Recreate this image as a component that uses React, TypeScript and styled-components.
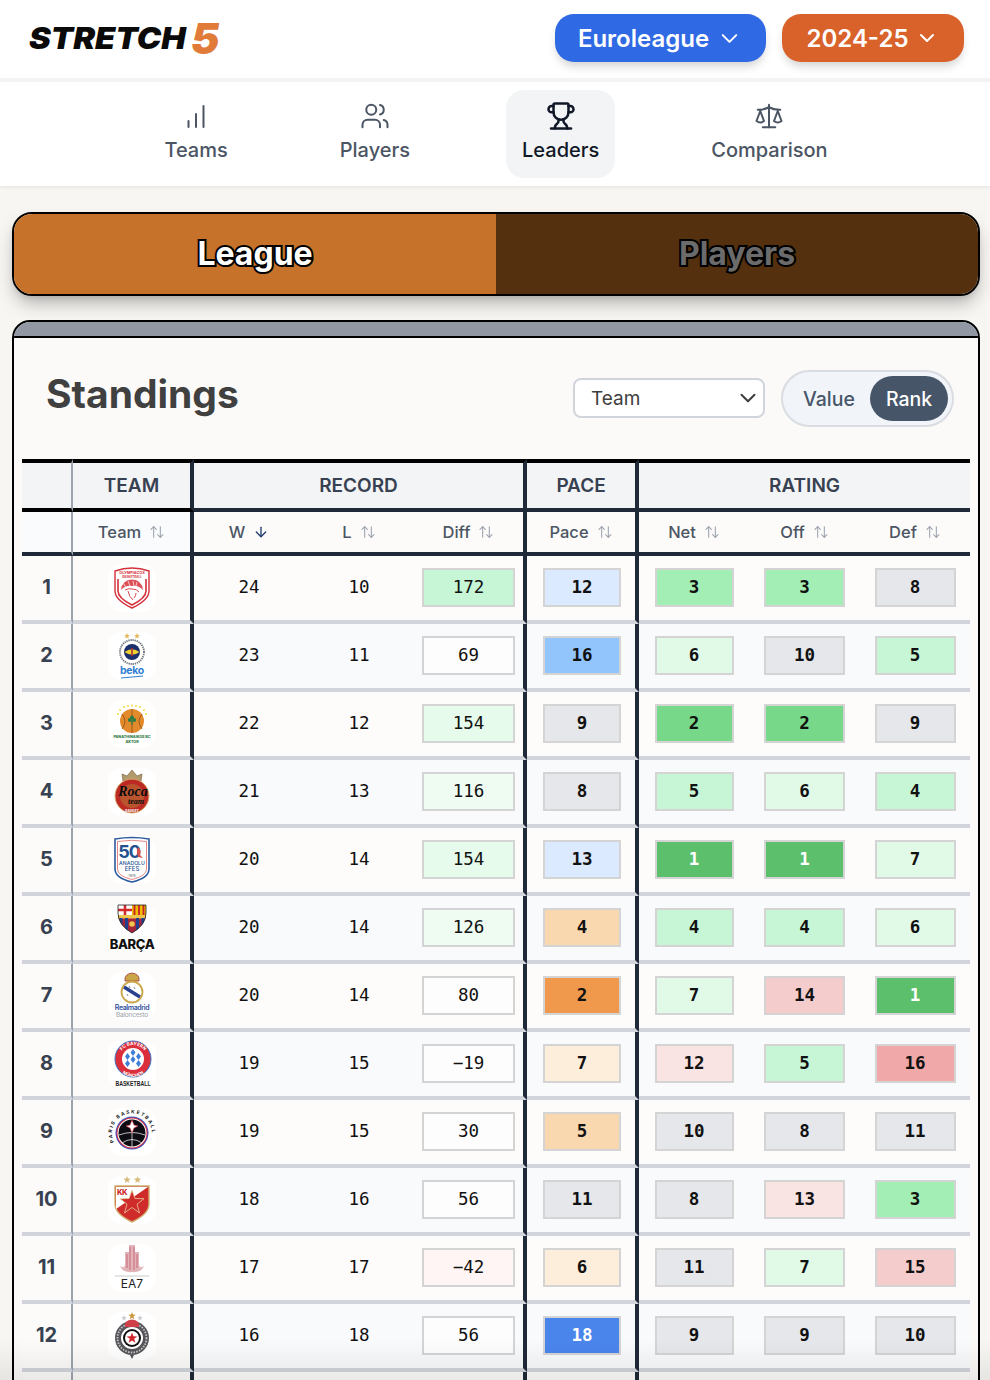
import React from 'react';
import styled, { createGlobalStyle } from 'styled-components';
import {
  ArrowDown,
  ArrowUpDown,
  ChevronDown,
  Scale,
  Trophy,
  Users,
} from 'lucide-react';

const GlobalStyle = createGlobalStyle`
  html, body {
    margin: 0;
    background: #f7f6f3;
    font-family: Inter, "Noto Sans", sans-serif;
  }
`;

const ratingColor = (n: number) => {
  if (n === 1) return '#5bbf6b';
  if (n === 2) return '#76d888';
  if (n === 3) return '#a3eeb5';
  if (n <= 5) return '#c6f6d5';
  if (n <= 7) return '#e1fae8';
  if (n <= 11) return '#e5e7eb';
  if (n <= 13) return '#fae3e3';
  if (n <= 15) return '#f5cccc';
  return '#f0a8a8';
};

const paceColor = (n: number) => {
  if (n === 18) return '#4a85ec';
  if (n === 16) return '#93c5fd';
  if (n >= 12) return '#dbeafe';
  if (n >= 8) return '#e5e7eb';
  if (n >= 6) return '#fdeedb';
  if (n >= 4) return '#f9d8b0';
  return '#f0984c';
};

const diffColor = (n: number) => {
  if (n >= 170) return '#c6f6d5';
  if (n >= 150) return '#e6fbec';
  if (n >= 100) return '#eefcf2';
  if (n <= -40) return '#fff5f4';
  return '#fdfdfd';
};

const BarsIcon = () => (
  <svg width="30" height="30" viewBox="0 0 30 30" fill="none" stroke="currentColor" strokeWidth="2" strokeLinecap="round">
    <path d="M7.500 26V20M15 26V13M22.500 26V5" />
  </svg>
);

const Olympiacos = () => (
  <svg width="48" height="48" viewBox="0 0 48 48">
    <path d="M7 7Q24 1 41 7V27Q41 36 24 44Q7 36 7 27Z" fill="#fff" stroke="#d4303a" strokeWidth="1.4" />
    <path d="M10 15V27Q10 34 24 41Q38 34 38 27V15" fill="none" stroke="#d4303a" strokeWidth="1.6" />
    <text x="24" y="9.500" fontSize="3.800" fontWeight="700" fill="#d4303a" textAnchor="middle" fontFamily="Inter">OLYMPIACOS</text>
    <text x="24" y="14" fontSize="3" fontWeight="700" fill="#d4303a" textAnchor="middle" fontFamily="Inter">BASKETBALL</text>
    <path d="M13 26Q14 16 24 15.500Q34 16 35 26Q30 21 24 22Q18 21 13 26Z" fill="#de5058" />
    <path d="M16 20l2 4M20 17l2 5M25 17l1 5M29 18l-1 4" stroke="#fff" strokeWidth=".7" />
    <path d="M17 26Q21 24 24 25Q29 25 31 28M20 27Q21 33 25 36M28 29Q28 32 26 34" fill="none" stroke="#d4303a" strokeWidth=".9" />
  </svg>
);

const Fener = () => (
  <svg width="48" height="48" viewBox="0 0 48 48">
    <path d="M19 1l.8 2 2 .2-1.500 1.300.5 2-1.800-1.100-1.800 1.100.5-2-1.500-1.300 2-.2zM29 1l.8 2 2 .2-1.500 1.300.5 2-1.800-1.100-1.800 1.100.5-2-1.500-1.300 2-.2z" fill="#e0b95a" />
    <circle cx="24" cy="20" r="12" fill="#fff" stroke="#6f737a" strokeWidth="1.800" strokeDasharray="1.300 .8" />
    <circle cx="24" cy="20" r="8" fill="#1e2f6e" />
    <path d="M16.500 20Q24 14.500 31.500 20Q24 25.500 16.500 20Z" fill="#f0d230" />
    <path d="M24 16v8" stroke="#b03030" strokeWidth="1.600" />
    <text x="24" y="42" fontSize="10.500" fontWeight="700" fill="#2f80d0" textAnchor="middle" fontFamily="Inter" letterSpacing="-.3">beko</text>
    <path d="M13 46L35 44" stroke="#2f80d0" strokeWidth="1.200" />
  </svg>
);

const Panathinaikos = () => (
  <svg width="48" height="48" viewBox="0 0 48 48">
    <g fill="#f2de3a">
      <circle cx="12" cy="10" r="1" /><circle cx="16" cy="7" r="1" /><circle cx="20" cy="6" r="1" /><circle cx="24" cy="5.500" r="1" />
      <circle cx="28" cy="6" r="1" /><circle cx="32" cy="7" r="1" /><circle cx="36" cy="10" r="1" /><circle cx="10" cy="14" r="1" /><circle cx="38" cy="14" r="1" />
    </g>
    <circle cx="24" cy="21" r="12" fill="#e38a2c" />
    <path d="M24 9v24M14 14Q20 21 14 29M34 14Q28 21 34 29" fill="none" stroke="#8a4d15" strokeWidth=".8" />
    <circle cx="21.800" cy="20" r="2" fill="#2f7d45" />
    <circle cx="26.200" cy="20" r="2" fill="#2f7d45" />
    <circle cx="24" cy="17.500" r="2" fill="#2f7d45" />
    <path d="M24 19v6" stroke="#2f7d45" strokeWidth="1.200" />
    <text x="24" y="38" fontSize="3.700" fontWeight="800" fill="#2f7d45" textAnchor="middle" fontFamily="Inter">PANATHINAIKOS BC</text>
    <text x="24" y="43" fontSize="3.700" fontWeight="800" fill="#2f7d45" textAnchor="middle" fontFamily="Inter">AKTOR</text>
  </svg>
);

const Monaco = () => (
  <svg width="48" height="48" viewBox="0 0 48 48">
    <path d="M15 13L14 6l5 2 5-6 5 6 5-2-1 7Z" fill="#b39a6a" stroke="#6f5a34" strokeWidth=".6" />
    <circle cx="24" cy="28" r="17" fill="#bd2a24" stroke="#d8b070" strokeWidth="1" />
    <circle cx="24" cy="28" r="12" fill="#b9542e" />
    <text x="25" y="28" fontSize="14" fontWeight="700" fontStyle="italic" fill="#0c0c0c" textAnchor="middle" fontFamily="Liberation Serif">Roca</text>
    <text x="28" y="36" fontSize="8" fontWeight="700" fontStyle="italic" fill="#0c0c0c" textAnchor="middle" fontFamily="Liberation Serif">team</text>
    <text x="24" y="43.500" fontSize="3.400" fontWeight="700" fill="#fff" textAnchor="middle" fontFamily="Inter">BASKET</text>
  </svg>
);

const Efes = () => (
  <svg width="48" height="48" viewBox="0 0 48 48">
    <path d="M7 3Q24 0 41 3V33Q41 42 24 46Q7 42 7 33Z" fill="#fff" stroke="#2c5a9e" strokeWidth="1.600" />
    <path d="M9.500 5.500Q24 3 38.500 5.500V33Q38.500 40 24 43.500Q9.500 40 9.500 33Z" fill="none" stroke="#d9534f" strokeWidth=".7" />
    <text x="21" y="22" fontSize="18" fontWeight="700" fill="#23508f" textAnchor="middle" fontFamily="Inter" letterSpacing="-1">50</text>
    <path d="M30 11q4 3 2 8l3 3-5-1-1-5Z" fill="#d9534f" />
    <text x="24" y="29" fontSize="5.200" fontWeight="500" fill="#23508f" textAnchor="middle" fontFamily="Inter">ANADOLU</text>
    <text x="24" y="35" fontSize="6" fontWeight="500" fill="#23508f" textAnchor="middle" fontFamily="Inter">EFES</text>
    <text x="24" y="40.500" fontSize="3.400" fill="#555" textAnchor="middle" fontFamily="Inter">1976</text>
  </svg>
);

const Barca = () => (
  <svg width="48" height="48" viewBox="0 0 48 48">
    <clipPath id="barcaShield">
      <path d="M10 1H38V9Q38 21 24 29Q10 21 10 9Z" />
    </clipPath>
    <g clipPath="url(#barcaShield)">
      <rect x="10" y="0" width="28" height="30" fill="#a4243b" />
      <rect x="10" y="1" width="14" height="10" fill="#fff" />
      <path d="M17 1V11M10 6H24" stroke="#d02a2a" strokeWidth="2.600" />
      <rect x="24" y="1" width="14" height="10" fill="#edbb00" />
      <path d="M26.500 1V11M31 1V11M35.500 1V11" stroke="#c7202c" strokeWidth="1.800" />
      <rect x="10" y="11" width="28" height="3.500" fill="#edc44c" />
      <path d="M13 14V26M18.500 14V28M29.500 14V28M35 14V26" stroke="#1f3f8f" strokeWidth="3" />
    </g>
    <path d="M10 1H38V9Q38 21 24 29Q10 21 10 9Z" fill="none" stroke="#222" strokeWidth=".8" />
    <circle cx="24" cy="20" r="2.800" fill="#edc44c" />
    <text x="24" y="45" fontSize="13" fontWeight="800" fill="#111" textAnchor="middle" fontFamily="Inter" letterSpacing="-.4">BARÇA</text>
  </svg>
);

const Madrid = () => (
  <svg width="48" height="48" viewBox="0 0 48 48">
    <path d="M17 9Q16 2 24 1Q32 2 31 9Z" fill="#c9a648" stroke="#a4343a" strokeWidth=".8" />
    <circle cx="24" cy="20" r="10.500" fill="#fff" stroke="#c9a648" strokeWidth="1.800" />
    <path d="M16 15L32 25" stroke="#2a3f8f" strokeWidth="3.500" />
    <path d="M21 14l1 2M26 15l1 2M19 22l1 2" stroke="#8a8f99" strokeWidth="1" />
    <text x="24" y="38" fontSize="7" fontWeight="600" fill="#2f4fa0" textAnchor="middle" fontFamily="Inter" letterSpacing="-.4">Realmadrid</text>
    <text x="24" y="45" fontSize="6.500" fill="#9aa0a8" textAnchor="middle" fontFamily="Inter" letterSpacing="-.2">Baloncesto</text>
  </svg>
);

const Bayern = () => (
  <svg width="48" height="48" viewBox="0 0 48 48">
    <circle cx="25" cy="19" r="18" fill="#dc2f3c" stroke="#3b73c9" strokeWidth="1" />
    <circle cx="25" cy="19" r="11" fill="#fff" />
    <g fill="#3f7fd6">
      <path d="M25 9l2.500 3.500-2.500 3.500-2.500-3.500zM19.500 13l2.500 3.500-2.500 3.500-2.500-3.500zM30.500 13l2.500 3.500-2.500 3.500-2.500-3.500zM25 16l2.500 3.500-2.500 3.500-2.500-3.500zM19.500 20l2.500 3.500-2.500 3.500-2.500-3.500zM30.500 20l2.500 3.500-2.500 3.500-2.500-3.500z" />
    </g>
    <path id="bayernArc" d="M11 19a14 14 0 0 1 28 0" fill="none" />
    <text fontSize="4.600" fontWeight="700" fill="#fff" fontFamily="Inter" textAnchor="middle">
      <textPath href="#bayernArc" startOffset="50%">FC BAYERN</textPath>
    </text>
    <path id="bayernArcLow" d="M8 20a17 17 0 0 0 34 0" fill="none" />
    <text fontSize="4.400" fontWeight="700" fill="#fff" fontFamily="Inter" textAnchor="middle">
      <textPath href="#bayernArcLow" startOffset="50%">MÜNCHEN</textPath>
    </text>
    <text x="0" y="0" transform="translate(25 46) scale(.8 1)" fontSize="6.500" fontWeight="700" fill="#222" textAnchor="middle" fontFamily="Liberation Sans">BASKETBALL</text>
  </svg>
);

const Paris = () => (
  <svg width="48" height="48" viewBox="0 0 48 48">
    <path id="parisArc" d="M6 34A20 20 0 1 1 42 34" fill="none" />
    <text fontSize="4.800" fontWeight="700" fill="#111" fontFamily="Inter" letterSpacing="1.600">
      <textPath href="#parisArc">PARIS BASKETBALL</textPath>
    </text>
    <circle cx="24" cy="25" r="16.500" fill="#3a56c8" />
    <circle cx="24" cy="25" r="15.500" fill="#d83040" />
    <circle cx="24" cy="25" r="14.500" fill="#fff" />
    <circle cx="24" cy="25" r="13.500" fill="#0c0c12" />
    <path d="M11 27Q24 22 37 27M14 35Q24 28 34 35M24 20V39" stroke="#e7e7ea" strokeWidth=".8" fill="none" />
    <path d="M24 12l2 5 4 1-4 2-2 5-2-5-4-2 4-1Z" fill="#fff" stroke="#d83040" strokeWidth=".6" />
  </svg>
);

const Zvezda = () => (
  <svg width="48" height="48" viewBox="0 0 48 48">
    <path d="M19 0l1 2.500 2.600.2-2 1.700.6 2.600-2.200-1.400-2.200 1.400.6-2.600-2-1.700 2.600-.2zM29.500 0l1 2.500 2.600.2-2 1.700.6 2.600-2.200-1.400-2.200 1.400.6-2.600-2-1.700 2.600-.2z" fill="#d8bb7c" />
    <path d="M7 10H41V28Q41 38 24 46Q7 38 7 28Z" fill="#cf2b2b" stroke="#d0b070" strokeWidth="1.400" />
    <path d="M8 11H40L8 33Z" fill="#fff" />
    <text x="9" y="19" fontSize="7.500" fontWeight="800" fill="#cf2b2b" fontFamily="Inter" letterSpacing="-.5">KK</text>
    <path d="M24 14l3 8.500 9 .2-7 5.500 2.500 8.800L24 31.500l-7.500 5.500L19 28.200l-7-5.500 9-.2Z" fill="#cf2b2b" stroke="#e6cfa0" strokeWidth=".8" />
  </svg>
);

const Milano = () => (
  <svg width="48" height="48" viewBox="0 0 48 48">
    <path d="M21 1H27V8H31V20Q31 25 36 22Q33 29 24 28Q15 29 12 22Q17 25 17 20V8H21Z" fill="#e3b3ba" />
    <path d="M22 3V26M26 3V26M19 10V24M29 10V24" stroke="#c46b78" strokeWidth="1" />
    <path d="M7 32H41" stroke="#b9bcc2" strokeWidth=".8" />
    <text x="24" y="44" fontSize="12" fill="#222" textAnchor="middle" fontFamily="Inter">EA7</text>
  </svg>
);

const Partizan = () => (
  <svg width="48" height="48" viewBox="0 0 48 48">
    <path d="M24 0l1 2.600 2.700.2-2.100 1.700.7 2.700L24 5.700l-2.300 1.500.7-2.700-2.100-1.700 2.700-.2z" fill="#c99a3e" />
    <path d="M16 3l.8 2 2 .2-1.600 1.200.5 2L16 7.300l-1.700 1.100.5-2L13.200 5.200l2-.2zM32 3l.8 2 2 .2-1.600 1.200.5 2L32 7.300l-1.700 1.100.5-2-1.600-1.200 2-.2z" fill="#c8cbd0" />
    <path d="M24 47l-2-4h4Z" fill="#555" />
    <circle cx="24" cy="26" r="17" fill="#55555a" />
    <circle cx="24" cy="26" r="14.500" fill="none" stroke="#c9c9cc" strokeWidth="1.800" strokeDasharray="1.500 1.300" />
    <path d="M17 15Q16 8 24 7.500Q32 8 31 15Z" fill="#d04048" />
    <circle cx="24" cy="26" r="11" fill="#fff" />
    <circle cx="24" cy="26" r="9" fill="#111" />
    <circle cx="24" cy="26" r="7" fill="#fff" />
    <path d="M24 20.500l1.400 3.800 4 .1-3.200 2.400 1.200 3.900-3.400-2.300-3.400 2.300 1.200-3.900-3.200-2.400 4-.1Z" fill="#d0282f" />
  </svg>
);

const rows = [
  { logo: <Olympiacos />, w: 24, l: 10, diff: 172, pace: 12, net: 3, off: 3, def: 8 },
  { logo: <Fener />, w: 23, l: 11, diff: 69, pace: 16, net: 6, off: 10, def: 5 },
  { logo: <Panathinaikos />, w: 22, l: 12, diff: 154, pace: 9, net: 2, off: 2, def: 9 },
  { logo: <Monaco />, w: 21, l: 13, diff: 116, pace: 8, net: 5, off: 6, def: 4 },
  { logo: <Efes />, w: 20, l: 14, diff: 154, pace: 13, net: 1, off: 1, def: 7 },
  { logo: <Barca />, w: 20, l: 14, diff: 126, pace: 4, net: 4, off: 4, def: 6 },
  { logo: <Madrid />, w: 20, l: 14, diff: 80, pace: 2, net: 7, off: 14, def: 1 },
  { logo: <Bayern />, w: 19, l: 15, diff: -19, pace: 7, net: 12, off: 5, def: 16 },
  { logo: <Paris />, w: 19, l: 15, diff: 30, pace: 5, net: 10, off: 8, def: 11 },
  { logo: <Zvezda />, w: 18, l: 16, diff: 56, pace: 11, net: 8, off: 13, def: 3 },
  { logo: <Milano />, w: 17, l: 17, diff: -42, pace: 6, net: 11, off: 7, def: 15 },
  { logo: <Partizan />, w: 16, l: 18, diff: 56, pace: 18, net: 9, off: 9, def: 10 },
];

const navItems = [
  { label: 'Teams', icon: <BarsIcon /> },
  { label: 'Players', icon: <Users size={30} strokeWidth={1.6} /> },
  { label: 'Leaders', icon: <Trophy size={30} strokeWidth={2} />, active: true },
  { label: 'Comparison', icon: <Scale size={30} strokeWidth={1.6} /> },
];

const columnWidths = [51, 121, 110, 110, 113, 112, 110, 111, 110];

const formatNumber = (n: number) => (n < 0 ? `−${Math.abs(n)}` : `${n}`);

const App = () => (
  <>
    <GlobalStyle />
    <Page>
      <Header>
        <Logo>
          <LogoWord>STRETCH</LogoWord>
          <LogoFive>5</LogoFive>
        </Logo>
        <HeaderPills>
          <Pill $bg="#2f69e4" $w={211}>
            Euroleague <ChevronDown size={27} strokeWidth={1.8} />
          </Pill>
          <Pill $bg="#d9622b" $w={182}>
            2024-25 <ChevronDown size={24} strokeWidth={2} />
          </Pill>
        </HeaderPills>
      </Header>
      <Nav>
        {navItems.map((item) => (
          <NavItem key={item.label} $active={item.active}>
            {item.icon}
            <span>{item.label}</span>
          </NavItem>
        ))}
      </Nav>
      <Main>
        <Switch>
          <SwitchSide $active>League</SwitchSide>
          <SwitchSide>Players</SwitchSide>
        </Switch>
        <Card>
          <CardStrip />
          <CardHead>
            <Title>Standings</Title>
            <Controls>
              <FakeSelect>
                Team
                <ChevronDown size={26} strokeWidth={1.9} />
              </FakeSelect>
              <Toggle>
                <ToggleOption>Value</ToggleOption>
                <ToggleOption $on>Rank</ToggleOption>
              </Toggle>
            </Controls>
          </CardHead>
          <Table>
            <colgroup>
              {columnWidths.map((w, i) => (
                <col key={i} style={{ width: w }} />
              ))}
            </colgroup>
            <thead>
              <tr>
                <GroupCell $line="thin" $black />
                <GroupCell $line="thick" $black>TEAM</GroupCell>
                <GroupCell $line="thick" colSpan={3}>RECORD</GroupCell>
                <GroupCell $line="thick">PACE</GroupCell>
                <GroupCell colSpan={3}>RATING</GroupCell>
              </tr>
              <tr>
                <SubCell $line="thin" />
                <SubCell $line="thick" $cool><SortLabel>Team <SortIcon /></SortLabel></SubCell>
                <SubCell>
                  <SortLabel>W <ArrowDown size={16} color="#1e3a6e" strokeWidth={2} /></SortLabel>
                </SubCell>
                <SubCell><SortLabel>L <SortIcon /></SortLabel></SubCell>
                <SubCell $line="thick"><SortLabel>Diff <SortIcon /></SortLabel></SubCell>
                <SubCell $line="thick"><SortLabel>Pace <SortIcon /></SortLabel></SubCell>
                <SubCell><SortLabel>Net <SortIcon /></SortLabel></SubCell>
                <SubCell><SortLabel>Off <SortIcon /></SortLabel></SubCell>
                <SubCell><SortLabel>Def <SortIcon /></SortLabel></SubCell>
              </tr>
            </thead>
            <tbody>
              {rows.map((row, i) => (
                <Row key={i} $even={i % 2 === 1}>
                  <RankCell>{i + 1}</RankCell>
                  <TeamCell><LogoTile>{row.logo}</LogoTile></TeamCell>
                  <Cell $pb={3}>{row.w}</Cell>
                  <Cell $pb={3}>{row.l}</Cell>
                  <Cell $line="thick">
                    <StatBox $w={93} $bg={diffColor(row.diff)} $light>{formatNumber(row.diff)}</StatBox>
                  </Cell>
                  <Cell $line="thick" $pl={2}>
                    <StatBox $w={78} $bg={paceColor(row.pace)} $fg={row.pace === 18 ? '#fff' : '#111'}>{row.pace}</StatBox>
                  </Cell>
                  <Cell>
                    <StatBox $w={79} $bg={ratingColor(row.net)} $fg={row.net === 1 ? '#fff' : '#111'}>{row.net}</StatBox>
                  </Cell>
                  <Cell>
                    <StatBox $w={81} $bg={ratingColor(row.off)} $fg={row.off === 1 ? '#fff' : '#111'}>{row.off}</StatBox>
                  </Cell>
                  <Cell>
                    <StatBox $w={81} $bg={ratingColor(row.def)} $fg={row.def === 1 ? '#fff' : '#111'}>{row.def}</StatBox>
                  </Cell>
                </Row>
              ))}
              <Row>
                <RankCell />
                <TeamCell />
                <Cell />
                <Cell />
                <Cell $line="thick" />
                <Cell $line="thick" />
                <Cell />
                <Cell />
                <Cell />
              </Row>
            </tbody>
          </Table>
        </Card>
      </Main>
      <BottomFade />
    </Page>
  </>
);

const SortIcon = () => <ArrowUpDown size={16} color="#9ca3af" strokeWidth={1.6} />;

const Page = styled.div`
  position: relative;
  width: 990px;
  height: 1380px;
  overflow: hidden;
`;

const Header = styled.header`
  height: 82px;
  box-sizing: border-box;
  background: #fff;
  border-bottom: 4px solid #f3f4f6;
  display: flex;
  align-items: center;
  justify-content: space-between;
  padding: 0 26px 2px 29px;
`;

const Logo = styled.div`
  display: flex;
  align-items: center;
  font-family: Inter, sans-serif;
  font-weight: 900;
  font-style: italic;
`;

const LogoWord = styled.span`
  display: inline-block;
  font-size: 30px;
  margin-right: 13px;
  color: #0a0a0a;
  transform: scaleX(1.09);
  transform-origin: left center;
`;

const LogoFive = styled.span`
  font-size: 43px;
  line-height: 1;
  margin-left: 5px;
  color: #e07b39;
`;

const HeaderPills = styled.div`
  display: flex;
  gap: 16px;
`;

const Pill = styled.div<{ $bg: string; $w: number }>`
  width: ${(p) => p.$w}px;
  height: 48px;
  box-sizing: border-box;
  display: flex;
  align-items: center;
  justify-content: center;
  gap: 7px;
  border-radius: 19px;
  background: ${(p) => p.$bg};
  color: #fff;
  font-size: 24px;
  font-weight: 600;
  box-shadow: 0 6px 10px -2px rgba(0, 0, 0, 0.18);
`;

const Nav = styled.nav`
  height: 104px;
  box-sizing: border-box;
  padding-left: 2px;
  background: #fff;
  box-shadow: 0 2px 3px rgba(0, 0, 0, 0.06);
  display: flex;
  justify-content: center;
  align-items: center;
  gap: 80px;
  position: relative;
`;

const NavItem = styled.div<{ $active?: boolean }>`
  height: 88px;
  box-sizing: border-box;
  padding: 11px 16px 0;
  border-radius: 18px;
  display: flex;
  flex-direction: column;
  align-items: center;
  gap: 5px;
  font-size: 20px;
  font-weight: 500;
  line-height: 28px;
  color: ${(p) => (p.$active ? '#111827' : '#4b5563')};
  background: ${(p) => (p.$active ? '#f3f4f6' : 'transparent')};
`;

const Main = styled.main`
  padding: 26px 10px 0 12px;
`;

const Switch = styled.div`
  height: 84px;
  box-sizing: border-box;
  border: 2px solid #000;
  border-radius: 20px;
  overflow: hidden;
  display: flex;
  box-shadow: 0 10px 18px -3px rgba(0, 0, 0, 0.28), 0 4px 6px -2px rgba(0, 0, 0, 0.1);
`;

const SwitchSide = styled.div<{ $active?: boolean }>`
  flex: 1;
  display: flex;
  align-items: center;
  justify-content: center;
  padding-bottom: 2px;
  font-size: 32px;
  font-weight: 700;
  background: ${(p) => (p.$active ? '#c6722a' : '#54300f')};
  color: ${(p) => (p.$active ? '#fff' : '#6b6b6b')};
  -webkit-text-stroke: 4px #000;
  paint-order: stroke fill;
`;

const Card = styled.section`
  margin-top: 24px;
  border: 2px solid #000;
  border-radius: 18px 18px 0 0;
  background: #fbfaf8;
  overflow: hidden;
  position: relative;
`;

const CardStrip = styled.div`
  height: 14px;
  background: #9298a3;
  border-bottom: 2px solid #000;
`;

const CardHead = styled.div`
  height: 121px;
  box-sizing: border-box;
  padding: 0 24px 10px 32px;
  display: flex;
  align-items: center;
  justify-content: space-between;
`;

const Title = styled.h2`
  margin: 0;
  font-size: 39px;
  font-weight: 700;
  color: #404040;
`;

const Controls = styled.div`
  display: flex;
  align-items: flex-start;
  gap: 16px;
  margin-top: 10px;
`;

const FakeSelect = styled.div`
  width: 192px;
  height: 40px;
  margin-top: 8px;
  box-sizing: border-box;
  padding: 0 2px 0 16px;
  display: flex;
  align-items: center;
  justify-content: space-between;
  background: #fff;
  border: 2px solid #d1d5db;
  border-radius: 8px;
  font-size: 19px;
  color: #404040;
`;

const Toggle = styled.div`
  width: 173px;
  height: 57px;
  box-sizing: border-box;
  padding: 4px 4px 4px 5px;
  display: flex;
  align-items: center;
  justify-content: space-between;
  background: #f1f5f9;
  border: 2px solid #d9dce1;
  border-radius: 29px;
`;

const ToggleOption = styled.div<{ $on?: boolean }>`
  height: 45px;
  width: ${(p) => (p.$on ? '78px' : '82px')};
  flex-shrink: 0;
  display: flex;
  align-items: center;
  justify-content: center;
  border-radius: 23px;
  font-size: 19.5px;
  font-weight: 500;
  color: ${(p) => (p.$on ? '#fff' : '#475569')};
  background: ${(p) => (p.$on ? '#475569' : 'transparent')};
`;

const Table = styled.table`
  width: 948px;
  margin-left: 8px;
  table-layout: fixed;
  border-collapse: separate;
  border-spacing: 0;
`;

const lineStyle = (line?: string) => {
  if (line === 'thick') return 'border-right: 4px solid #1f2937;';
  if (line === 'thin') return 'border-right: 2px solid #9ca3af;';
  return '';
};

const GroupCell = styled.th<{ $line?: string; $black?: boolean }>`
  height: 53px;
  box-sizing: border-box;
  padding: 0 0 1px;
  border-top: 4px solid #000;
  border-bottom: 4px solid ${(p) => (p.$black ? '#000' : '#1f2937')};
  ${(p) => lineStyle(p.$line)}
  background: #f3f4f6;
  text-align: center;
  font-size: 19px;
  font-weight: 600;
  color: #374151;
`;

const SubCell = styled.th<{ $line?: string; $cool?: boolean }>`
  height: 44px;
  box-sizing: border-box;
  padding: 0;
  border-bottom: 4px solid #1f2937;
  ${(p) => lineStyle(p.$line)}
  background: ${(p) => (p.$line === 'thin' || p.$cool ? '#fafbfd' : '#fcfbf9')};
  font-weight: 500;
`;

const SortLabel = styled.span`
  display: inline-flex;
  align-items: center;
  gap: 8px;
  font-size: 16.5px;
  color: #4b5563;
`;

const Row = styled.tr<{ $even?: boolean }>`
  background: ${(p) => (p.$even ? '#f9fafc' : '#fdfcfa')};
`;

const Cell = styled.td<{ $line?: string; $pl?: number; $pb?: number }>`
  height: 68px;
  box-sizing: border-box;
  padding: 0 0 ${(p) => p.$pb || 1}px ${(p) => p.$pl || 0}px;
  border-bottom: 4px solid #d1d5db;
  ${(p) => lineStyle(p.$line)}
  text-align: center;
  font-family: "DejaVu Sans Mono", monospace;
  font-size: 17.5px;
  color: #111;
`;

const RankCell = styled.td`
  height: 68px;
  box-sizing: border-box;
  padding: 0 0 3px;
  border-bottom: 4px solid #d1d5db;
  border-right: 2px solid #9ca3af;
  background: #fcfbf9;
  text-align: center;
  font-size: 20px;
  font-weight: 700;
  color: #374151;
`;

const TeamCell = styled.td`
  height: 68px;
  box-sizing: border-box;
  padding: 0 0 1px;
  border-bottom: 4px solid #d1d5db;
  border-right: 4px solid #1f2937;
  background: #fcfbf9;
`;

const LogoTile = styled.div`
  width: 48px;
  height: 48px;
  margin: 0 auto;
  background: #fff;
  border-radius: 14px;
  display: flex;
`;

const StatBox = styled.div<{ $w: number; $bg: string; $fg?: string; $light?: boolean }>`
  width: ${(p) => p.$w}px;
  height: 39px;
  box-sizing: border-box;
  margin: 0 auto;
  padding-bottom: 2px;
  display: flex;
  align-items: center;
  justify-content: center;
  border: 2px solid #d4d4d4;
  background: ${(p) => p.$bg};
  color: ${(p) => p.$fg || '#111'};
  font-weight: ${(p) => (p.$light ? 400 : 700)};
`;

const BottomFade = styled.div`
  position: absolute;
  left: 0;
  right: 0;
  bottom: 0;
  height: 40px;
  background: linear-gradient(to bottom, rgba(0, 0, 0, 0), rgba(0, 0, 0, 0.07));
  pointer-events: none;
`;

export default App;
